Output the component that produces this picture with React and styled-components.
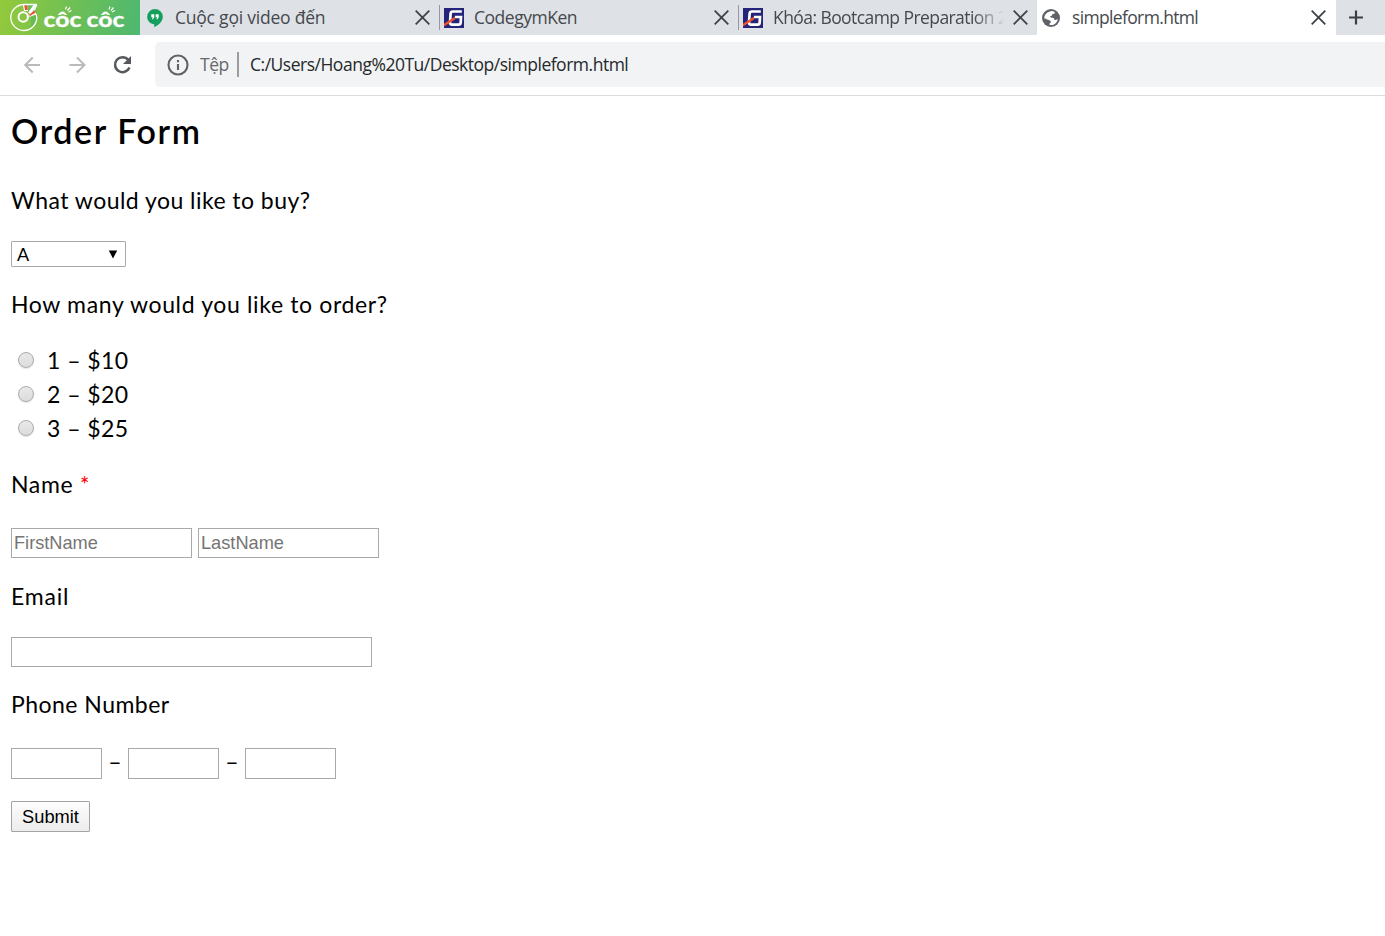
import React from 'react';
import styled, { createGlobalStyle } from 'styled-components';

const Global = createGlobalStyle`
  * { box-sizing: border-box; }
  body { margin: 0; background: #fff; overflow: hidden; }
  input, select, button { margin: 0; font-family: "Liberation Sans", Arial, sans-serif; }
`;

const Window = styled.div`
  display: flex;
  flex-direction: column;
  height: 936px;
  background: #fff;
`;

const TabStrip = styled.div`
  display: flex;
  height: 35px;
  background: #dee1e6;
  font-family: "Open Sans", "Noto Sans", sans-serif;
`;

const Brand = styled.div`
  display: flex;
  align-items: center;
  width: 140px;
  height: 35px;
  background: linear-gradient(100deg, #94c93b 0%, #6fbf55 50%, #4db870 100%);
`;

const Tab = styled.div`
  display: flex;
  align-items: center;
  width: ${p => p.$width}px;
  height: 35px;
  padding-right: ${p => p.$end || 9}px;
  background: ${p => (p.$active ? '#fff' : 'transparent')};
`;

const Divider = styled.span`
  width: 1px;
  height: 25px;
  background: ${p => (p.$visible ? '#96989c' : 'transparent')};
`;

const Favicon = styled.span`
  display: flex;
  align-items: center;
  width: 34px;
  padding-left: ${p => p.$inset}px;
`;

const TabTitle = styled.span`
  flex: 1;
  min-width: 0;
  height: 35px;
  margin-right: 10px;
  overflow: hidden;
  white-space: nowrap;
  font-size: 17.5px;
  line-height: 35px;
  letter-spacing: ${p => p.$track}px;
  color: #45494d;
  ${p => p.$fade && 'mask-image: linear-gradient(to right, #000 200px, transparent 232px);'}
`;

const NewTab = styled.div`
  display: flex;
  align-items: center;
  padding-left: 12px;
`;

const Toolbar = styled.div`
  display: flex;
  align-items: center;
  height: 61px;
  padding: 0 0 2px 22px;
  border-bottom: 1px solid #dadcde;
  font-family: "Open Sans", "Noto Sans", sans-serif;
`;

const NavButton = styled.span`
  display: flex;
  width: 45px;
  padding-top: 1px;
`;

const AddressBar = styled.div`
  display: flex;
  align-items: center;
  flex: 1;
  height: 45px;
  margin-left: -2px;
  padding: 1px 0 0 12px;
  border-radius: 5px 0 0 5px;
  background: #f1f3f4;
  font-size: 17.5px;
  white-space: nowrap;
`;

const Scheme = styled.span`
  width: 37px;
  margin-left: 11px;
  padding-bottom: 1px;
  letter-spacing: ${p => p.$track}px;
  color: #66696d;
`;

const Bar = styled.span`
  width: 2px;
  height: 25px;
  margin-right: 11px;
  background: #9a9c9f;
`;

const Address = styled.span`
  padding-bottom: 1px;
  letter-spacing: ${p => p.$track}px;
  color: #26282b;
`;

const Form = styled.form`
  display: flex;
  flex-direction: column;
  align-items: flex-start;
  padding-left: 11px;
  font-family: Lato, "Open Sans", sans-serif;
  font-size: 23px;
  color: #000;
`;

const Heading = styled.h1`
  margin: 15px 0 34px;
  font-size: 34px;
  font-weight: 600;
  line-height: 40px;
  letter-spacing: ${p => p.$track}px;
  white-space: nowrap;
`;

const Label = styled.div`
  height: 30px;
  margin-bottom: ${p => p.$gap}px;
  line-height: 30px;
  letter-spacing: ${p => p.$track}px;
  white-space: nowrap;
`;

const Required = styled.span`
  color: #f00;
`;

const SelectBox = styled.div`
  display: flex;
  align-items: center;
  justify-content: space-between;
  width: 115px;
  height: 26px;
  margin-bottom: 22px;
  padding: 0 7px 0 5px;
  border: 1px solid #a9a9a9;
  border-radius: 1px;
  font: 18px Lato, sans-serif;
`;

const Choices = styled.div`
  display: flex;
  flex-direction: column;
  margin-bottom: 24px;
`;

const Choice = styled.label`
  display: flex;
  align-items: center;
  height: 34px;
  padding-left: 7px;
  letter-spacing: ${p => p.$track}px;
  white-space: nowrap;
`;

const Radio = styled.input`
  appearance: none;
  width: 16px;
  height: 16px;
  margin: 0 13px 0 0;
  border: 1px solid #aaa;
  border-radius: 50%;
  background: linear-gradient(#e9e9e9, #dcdcdc);
  box-shadow: 0 1px 1px #e4e4e4;
`;

const FieldRow = styled.div`
  display: flex;
  align-items: center;
  gap: ${p => p.$gap || 0}px;
  margin-bottom: ${p => p.$after}px;
`;

const Field = styled.input`
  width: ${p => p.$width}px;
  height: ${p => p.$height || 30}px;
  padding: 0 2px;
  border: 1px solid #a9a9a9;
  border-radius: 0;
  background: #fff;
  font-size: 18.2px;
  outline: none;
  &::placeholder { color: #757575; opacity: 1; }
`;

const Dash = styled.span`
  display: flex;
  justify-content: center;
  width: 26px;
  height: 30px;
  line-height: 24px;
`;

const Submit = styled.button`
  width: 79px;
  height: 31px;
  padding: 1px 0 0;
  border: 1px solid #a3a3a3;
  border-radius: 1px;
  background: linear-gradient(#fdfdfd, #ececec);
  font-size: 18.3px;
  color: #000;
`;

const Logo = () => (
  <svg width="140" height="35" viewBox="0 0 140 35" fill="none">
    <path d="M24 4.500H37V17A13 13 0 0 1 30 29Q34 20 26 10Z" fill="#3eae65" opacity=".4" />
    <path d="M36.800 4.500H24A13 13 0 1 0 36.800 17.500C36.800 14.500 35.500 13 34 11.500L36.800 4.500" stroke="#fff" strokeWidth="1.300" />
    <circle cx="23.200" cy="17" r="4.700" stroke="#fff" strokeWidth="2" />
    <path d="M24 11L23 5H27L28 11ZM28 12.500L33.500 5H36.500L31 14.500ZM28.500 15L35 11.500L36 14.500L29.500 17Z" fill="#fff" />
    <path d="M25 10L24.200 5.300H27L27.800 10ZM29 15L34.500 10.300L35.500 12.800L30 16Z" fill="#ef5033" />
    <g fill="#fff" fontFamily="Lato, sans-serif" fontWeight="700" fontSize="21">
      <text x="43.500" y="27" textLength="38" lengthAdjust="spacingAndGlyphs" stroke="#fff" strokeWidth=".3">côc</text>
      <text x="86.500" y="27" textLength="38" lengthAdjust="spacingAndGlyphs" stroke="#fff" strokeWidth=".3">côc</text>
    </g>
    <path d="M65.500 9.500L66.500 6.500M67.500 10.500L70 7.500M68.500 12L71.500 10.500M109 9.500L110 6.500M111 10.500L113.500 7.500M112 12L115 10.500" stroke="#fff" strokeWidth="1.200" />
  </svg>
);

const ChatIcon = () => (
  <svg width="16" height="18" viewBox="0 0 16 18">
    <path d="M8 0A7.800 7.800 0 0 0 .2 7.700C.2 12 3.500 15 7.200 15.200V18C11 16.500 15.800 12.800 15.800 7.700A7.800 7.800 0 0 0 8 0Z" fill="#149f5c" />
    <path d="M4.300 5.200H7.300V8.200L6 10.200H5L5.700 8.200H4.300ZM8.700 5.200H11.700V8.200L10.400 10.200H9.400L10.100 8.200H8.700Z" fill="#fff" />
  </svg>
);

const GymIcon = () => (
  <svg width="20" height="20" viewBox="0 0 20 20" fill="none">
    <path d="M0 0H20V20H0Z" fill="#25247b" />
    <path d="M17.800 3.500H8.800Q6.800 3.500 6.600 5.500L6 14.500Q5.900 16.600 8 16.600H14.500Q16.500 16.600 16.700 14.600L17 9H11" stroke="#fff" strokeWidth="2.700" />
    <path d="M0 15.800L11 8.600V11.400L0 18.400Z" fill="#f0522b" />
  </svg>
);

const GlobeIcon = () => (
  <svg width="18" height="18" viewBox="0 0 18 18">
    <circle cx="9" cy="9" r="9" fill="#5f6368" />
    <path d="M9.500 2C10.800 2.100 12 2.500 13 3.200C12.800 4.700 11.800 5 10.200 5.200C10.200 6.700 9.500 7 8.300 7.100C8.200 8.200 8.500 8.800 10 8.700C12 8.600 12.400 9.500 12.300 11C14 11 14.200 10.500 15.800 10.200C15.200 13.500 12.500 16 9.200 16.100C7.500 16 7.300 15.500 7.500 14.500C9 13.800 9.200 13 8.500 12C7.300 10.600 5 11 2 8.800C2.100 9.800 2.300 11 2.900 12.300C1.300 8 2.800 3.300 9.500 2Z" fill="#fff" />
  </svg>
);

const CloseIcon = () => (
  <svg width="15" height="15" viewBox="0 0 15 15">
    <path d="M.7.7L14.300 14.300M14.300.7L.7 14.300" stroke="#3f4347" strokeWidth="1.800" />
  </svg>
);

const PlusIcon = () => (
  <svg width="16" height="16" viewBox="0 0 16 16">
    <path d="M8 .5V14.500M1 7.500H15" stroke="#3c4043" strokeWidth="2.200" />
  </svg>
);

const ArrowIcon = ({ forward }) => (
  <svg width="20" height="20" viewBox="0 0 20 20" fill="none" stroke="#b9babc" strokeWidth="2">
    {forward
      ? <path d="M2.500 10H17M10 2.500L17.500 10L10 17.500" />
      : <path d="M18 10H4M10.700 2.500L3.200 10L10.700 17.500" />}
  </svg>
);

const ReloadIcon = () => (
  <svg width="20" height="20" viewBox="0 0 20 20" fill="none">
    <path d="M17.500 12.500A7.500 7.500 0 1 1 16.300 4.800" stroke="#55595e" strokeWidth="2.500" />
    <path d="M19 1V9H11Z" fill="#55595e" />
  </svg>
);

const InfoIcon = () => (
  <svg width="22" height="22" viewBox="0 0 22 22" fill="none">
    <circle cx="11" cy="11" r="9.500" stroke="#5f6368" strokeWidth="2.100" />
    <path d="M11 10V16M11 6V8.200" stroke="#5f6368" strokeWidth="2.100" />
  </svg>
);

const tabs = [
  { title: 'Cuộc gọi video đến', icon: <ChatIcon />, inset: 6, track: -0.22, width: 299 },
  { title: 'CodegymKen', icon: <GymIcon />, inset: 4, divided: true, track: -0.48, width: 299 },
  { title: 'Khóa: Bootcamp Preparation 2', icon: <GymIcon />, inset: 4, divided: true, fade: true, track: -0.57, width: 299 },
  { title: 'simpleform.html', icon: <GlobeIcon />, inset: 4, active: true, track: -0.65, width: 299, end: 10 },
];

const choices = ['1 – $10', '2 – $20', '3 – $25'];

export default function App() {
  return (
    <Window>
      <Global />
      <TabStrip>
        <Brand><Logo /></Brand>
        {tabs.map(t => (
          <Tab key={t.title} $active={t.active} $width={t.width} $end={t.end}>
            <Divider $visible={t.divided} />
            <Favicon $inset={t.inset}>{t.icon}</Favicon>
            <TabTitle $fade={t.fade} $track={t.track}>{t.title}</TabTitle>
            <CloseIcon />
          </Tab>
        ))}
        <NewTab><PlusIcon /></NewTab>
      </TabStrip>
      <Toolbar>
        <NavButton><ArrowIcon /></NavButton>
        <NavButton><ArrowIcon forward /></NavButton>
        <NavButton><ReloadIcon /></NavButton>
        <AddressBar>
          <InfoIcon />
          <Scheme $track={-0.5}>Tệp</Scheme>
          <Bar />
          <Address $track={-0.49}>C:/Users/Hoang%20Tu/Desktop/simpleform.html</Address>
        </AddressBar>
      </Toolbar>
      <Form onSubmit={e => e.preventDefault()}>
        <Heading $track={1.6}>Order Form</Heading>
        <Label $gap={26} $track={0.46}>What would you like to buy?</Label>
        <SelectBox>
          <span>A</span>
          <svg width="10" height="9" viewBox="0 0 10 9"><path d="M.8.500H9.200L5 8.500Z" /></svg>
        </SelectBox>
        <Label $gap={24} $track={0.64}>How many would you like to order?</Label>
        <Choices>
          {choices.map(c => (
            <Choice key={c} $track={0.45}><Radio type="radio" name="quantity" />{c}</Choice>
          ))}
        </Choices>
        <Label $gap={29} $track={0.65}>Name <Required>*</Required></Label>
        <FieldRow $gap={6} $after={23}>
          <Field $width={181} placeholder="FirstName" />
          <Field $width={181} placeholder="LastName" />
        </FieldRow>
        <Label $gap={26} $track={0.8}>Email</Label>
        <FieldRow $after={22}><Field $width={361} /></FieldRow>
        <Label $gap={29} $track={0.47}>Phone Number</Label>
        <FieldRow $after={22}>
          <Field $width={91} $height={31} />
          <Dash>–</Dash>
          <Field $width={91} $height={31} />
          <Dash>–</Dash>
          <Field $width={91} $height={31} />
        </FieldRow>
        <Submit>Submit</Submit>
      </Form>
    </Window>
  );
}
